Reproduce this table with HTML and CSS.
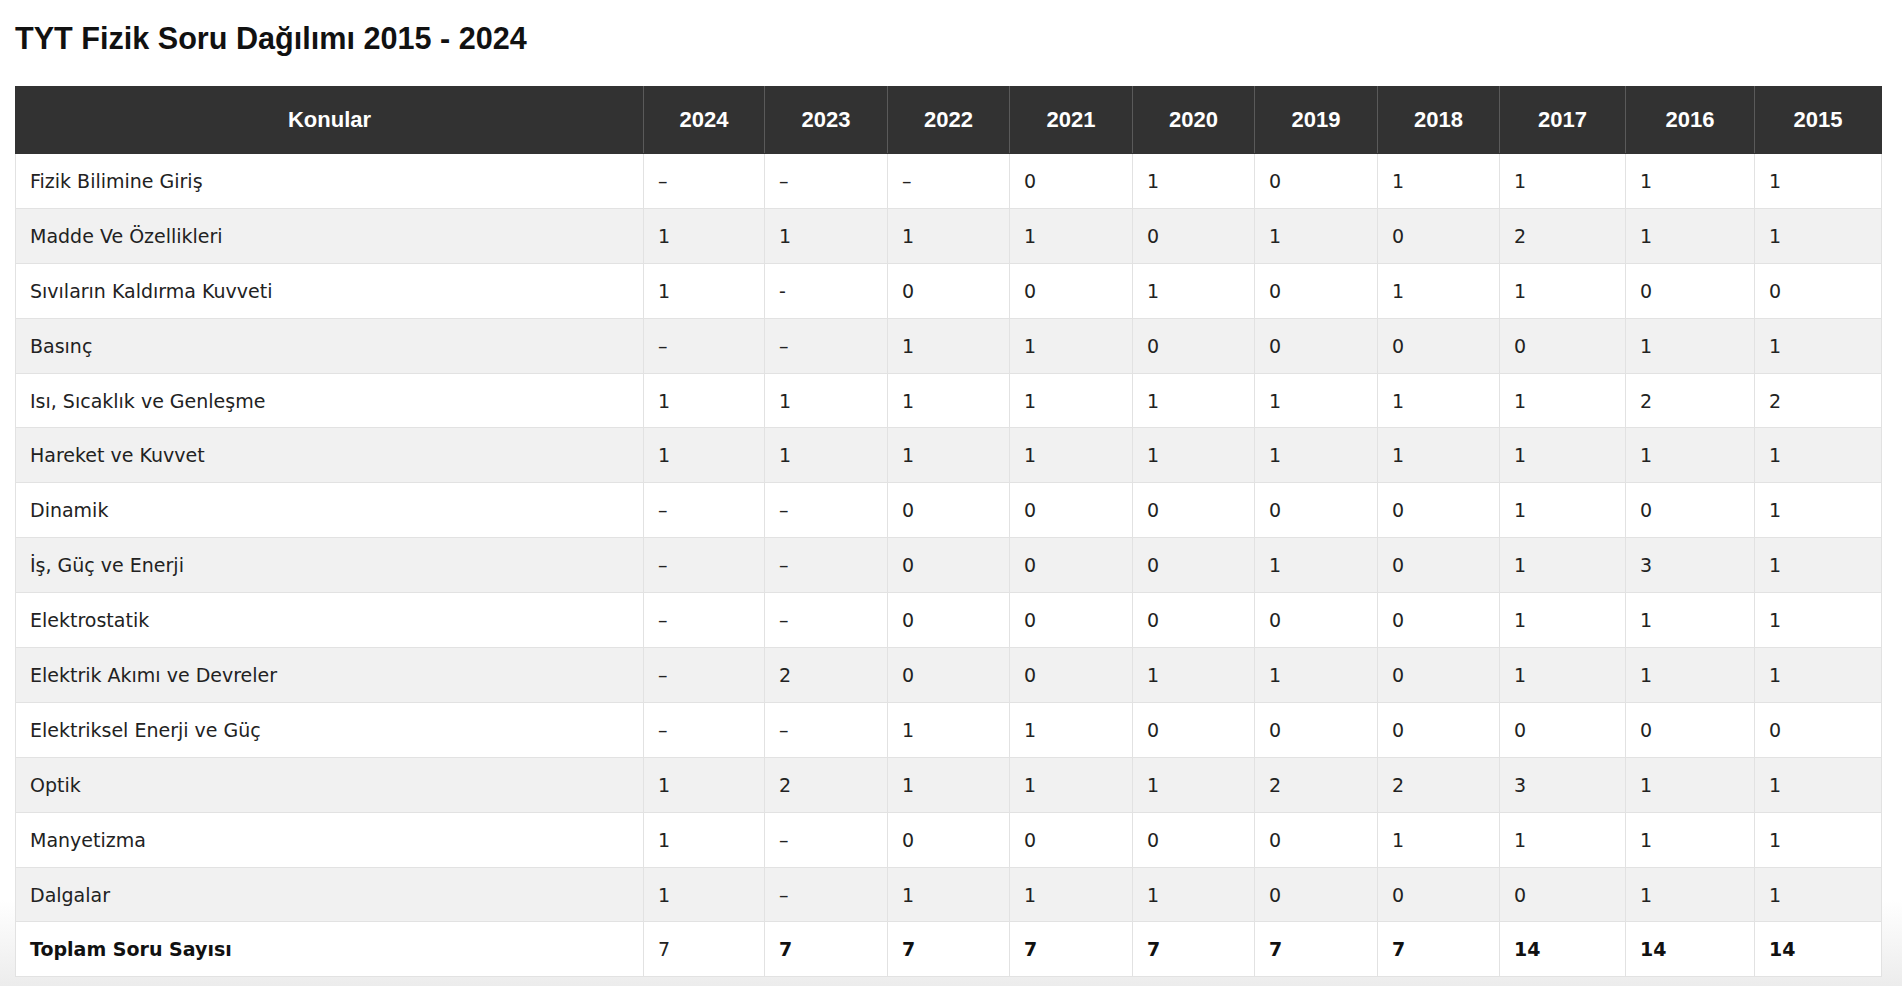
FILE: index.html
```html
<!DOCTYPE html>
<html lang="tr">
<head>
<meta charset="utf-8">
<title>TYT Fizik Soru Dağılımı 2015 - 2024</title>
<link rel="stylesheet" href="styles.css">
</head>
<body>
<main class="page">
  <h1 class="title">TYT Fizik Soru Dağılımı 2015 - 2024</h1>
  <table class="dist">
    <colgroup>
      <col class="c-topic">
      <col class="c-121"><col class="c-123"><col class="c-122"><col class="c-123"><col class="c-122">
      <col class="c-123"><col class="c-122"><col class="c-126"><col class="c-129"><col class="c-127">
    </colgroup>
    <thead>
      <tr>
        <th>Konular</th><th>2024</th><th>2023</th><th>2022</th><th>2021</th><th>2020</th><th>2019</th><th>2018</th><th>2017</th><th>2016</th><th>2015</th>
      </tr>
    </thead>
    <tbody>
      <tr><td>Fizik Bilimine Giriş</td><td>–</td><td>–</td><td>–</td><td>0</td><td>1</td><td>0</td><td>1</td><td>1</td><td>1</td><td>1</td></tr>
      <tr><td>Madde Ve Özellikleri</td><td>1</td><td>1</td><td>1</td><td>1</td><td>0</td><td>1</td><td>0</td><td>2</td><td>1</td><td>1</td></tr>
      <tr><td>Sıvıların Kaldırma Kuvveti</td><td>1</td><td>-</td><td>0</td><td>0</td><td>1</td><td>0</td><td>1</td><td>1</td><td>0</td><td>0</td></tr>
      <tr><td>Basınç</td><td>–</td><td>–</td><td>1</td><td>1</td><td>0</td><td>0</td><td>0</td><td>0</td><td>1</td><td>1</td></tr>
      <tr><td>Isı, Sıcaklık ve Genleşme</td><td>1</td><td>1</td><td>1</td><td>1</td><td>1</td><td>1</td><td>1</td><td>1</td><td>2</td><td>2</td></tr>
      <tr><td>Hareket ve Kuvvet</td><td>1</td><td>1</td><td>1</td><td>1</td><td>1</td><td>1</td><td>1</td><td>1</td><td>1</td><td>1</td></tr>
      <tr><td>Dinamik</td><td>–</td><td>–</td><td>0</td><td>0</td><td>0</td><td>0</td><td>0</td><td>1</td><td>0</td><td>1</td></tr>
      <tr><td>İş, Güç ve Enerji</td><td>–</td><td>–</td><td>0</td><td>0</td><td>0</td><td>1</td><td>0</td><td>1</td><td>3</td><td>1</td></tr>
      <tr><td>Elektrostatik</td><td>–</td><td>–</td><td>0</td><td>0</td><td>0</td><td>0</td><td>0</td><td>1</td><td>1</td><td>1</td></tr>
      <tr><td>Elektrik Akımı ve Devreler</td><td>–</td><td>2</td><td>0</td><td>0</td><td>1</td><td>1</td><td>0</td><td>1</td><td>1</td><td>1</td></tr>
      <tr><td>Elektriksel Enerji ve Güç</td><td>–</td><td>–</td><td>1</td><td>1</td><td>0</td><td>0</td><td>0</td><td>0</td><td>0</td><td>0</td></tr>
      <tr><td>Optik</td><td>1</td><td>2</td><td>1</td><td>1</td><td>1</td><td>2</td><td>2</td><td>3</td><td>1</td><td>1</td></tr>
      <tr><td>Manyetizma</td><td>1</td><td>–</td><td>0</td><td>0</td><td>0</td><td>0</td><td>1</td><td>1</td><td>1</td><td>1</td></tr>
      <tr><td>Dalgalar</td><td>1</td><td>–</td><td>1</td><td>1</td><td>1</td><td>0</td><td>0</td><td>0</td><td>1</td><td>1</td></tr>
      <tr class="total"><td class="b">Toplam Soru Sayısı</td><td>7</td><td class="b">7</td><td class="b">7</td><td class="b">7</td><td class="b">7</td><td class="b">7</td><td class="b">7</td><td class="b">14</td><td class="b">14</td><td class="b">14</td></tr>
    </tbody>
  </table>
</main>
</body>
</html>
```

FILE: styles.css
```css
html, body {
  margin: 0;
  padding: 0;
}

body {
  background: linear-gradient(to bottom, #ffffff 0, #ffffff 900px, #ececec 986px);
  min-height: 986px;
  color: #222;
}

.page {
  padding: 21px 21px 10px 15px;
}

.title {
  margin: 0 0 31px 0;
  font-family: "Liberation Sans", Arial, sans-serif;
  font-weight: bold;
  font-size: 30.6px;
  line-height: 34px;
  color: #111;
}

.dist {
  width: 1866px;
  table-layout: fixed;
  border-collapse: collapse;
  border: 1px solid #dcdcdc;
  background: #fff;
}

.c-topic { width: 628px; }
.c-121 { width: 121px; }
.c-122 { width: 122px; }
.c-123 { width: 123px; }
.c-126 { width: 126px; }
.c-127 { width: 127px; }
.c-129 { width: 129px; }

.dist th {
  height: 66px;
  padding: 0;
  background: #323232;
  color: #fff;
  font-family: "Liberation Sans", Arial, sans-serif;
  font-weight: bold;
  font-size: 22px;
  text-align: center;
  vertical-align: middle;
  border: 1px solid #5a5a5a;
  border-top-color: #323232;
  border-bottom-color: #323232;
}

.dist th:first-child { border-left-color: #323232; }
.dist th:last-child { border-right-color: #323232; }

.dist td {
  height: 53.9px;
  padding: 0 14px;
  font-family: "DejaVu Sans", Verdana, sans-serif;
  font-size: 19px;
  color: #222;
  text-align: left;
  vertical-align: middle;
  border: 1px solid #e2e2e2;
  white-space: nowrap;
}

.dist tbody tr:nth-child(even) td {
  background: #f1f1f1;
}

.dist td.b {
  font-weight: bold;
  color: #111;
}
```
